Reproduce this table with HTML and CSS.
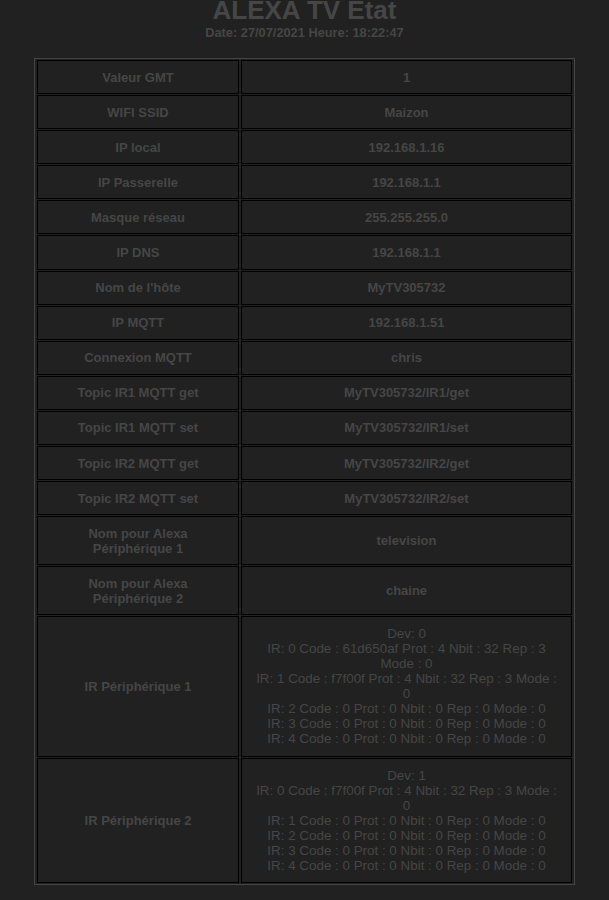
FILE: index.html
```html
<!DOCTYPE html>
<html lang="fr">
<head>
<meta charset="utf-8">
<title>ALEXA TV Etat</title>
<link rel="stylesheet" href="styles.css">
</head>
<body>
<header class="head">
  <h1 class="title">ALEXA TV Etat</h1>
  <div class="date">Date: 27/07/2021 Heure: 18:22:47</div>
</header>
<table class="info">
  <tr><td class="lab">Valeur GMT</td><td class="val">1</td></tr>
  <tr><td class="lab">WIFI SSID</td><td class="val">Maizon</td></tr>
  <tr><td class="lab">IP local</td><td class="val">192.168.1.16</td></tr>
  <tr><td class="lab">IP Passerelle</td><td class="val">192.168.1.1</td></tr>
  <tr><td class="lab">Masque réseau</td><td class="val">255.255.255.0</td></tr>
  <tr><td class="lab">IP DNS</td><td class="val">192.168.1.1</td></tr>
  <tr><td class="lab">Nom de l'hôte</td><td class="val">MyTV305732</td></tr>
  <tr><td class="lab">IP MQTT</td><td class="val">192.168.1.51</td></tr>
  <tr><td class="lab">Connexion MQTT</td><td class="val">chris</td></tr>
  <tr><td class="lab">Topic IR1 MQTT get</td><td class="val">MyTV305732/IR1/get</td></tr>
  <tr><td class="lab">Topic IR1 MQTT set</td><td class="val">MyTV305732/IR1/set</td></tr>
  <tr><td class="lab">Topic IR2 MQTT get</td><td class="val">MyTV305732/IR2/get</td></tr>
  <tr><td class="lab">Topic IR2 MQTT set</td><td class="val">MyTV305732/IR2/set</td></tr>
  <tr><td class="lab">Nom pour Alexa<br>Périphérique 1</td><td class="val">television</td></tr>
  <tr><td class="lab">Nom pour Alexa<br>Périphérique 2</td><td class="val">chaine</td></tr>
  <tr><td class="lab">IR Périphérique 1</td><td class="val ir">Dev: 0<br>IR: 0 Code : 61d650af Prot : 4 Nbit : 32 Rep : 3 Mode : 0<br>IR: 1 Code : f7f00f Prot : 4 Nbit : 32 Rep : 3 Mode : 0<br>IR: 2 Code : 0 Prot : 0 Nbit : 0 Rep : 0 Mode : 0<br>IR: 3 Code : 0 Prot : 0 Nbit : 0 Rep : 0 Mode : 0<br>IR: 4 Code : 0 Prot : 0 Nbit : 0 Rep : 0 Mode : 0</td></tr>
  <tr><td class="lab">IR Périphérique 2</td><td class="val ir">Dev: 1<br>IR: 0 Code : f7f00f Prot : 4 Nbit : 32 Rep : 3 Mode : 0<br>IR: 1 Code : 0 Prot : 0 Nbit : 0 Rep : 0 Mode : 0<br>IR: 2 Code : 0 Prot : 0 Nbit : 0 Rep : 0 Mode : 0<br>IR: 3 Code : 0 Prot : 0 Nbit : 0 Rep : 0 Mode : 0<br>IR: 4 Code : 0 Prot : 0 Nbit : 0 Rep : 0 Mode : 0</td></tr>
</table>
</body>
</html>
```
FILE: styles.css
```css
html, body {
  margin: 0;
  padding: 0;
  background: #212121;
}
body {
  font-family: "Liberation Sans", Arial, sans-serif;
  color: #464646;
  padding-bottom: 16px;
}
.head {
  text-align: center;
  margin-top: -5px;
}
.title {
  font-size: 26px;
  font-weight: bold;
  line-height: 30px;
  margin: 0;
}
.date {
  font-size: 12.8px;
  font-weight: bold;
  line-height: 14px;
  margin-top: 1px;
}
.info {
  width: 541px;
  margin: 18px auto 0;
  border: 1px solid #444;
  border-spacing: 2px 1px;
  font-size: 13px;
  font-weight: bold;
  text-align: center;
}
.info td {
  border: 1px solid #000;
  padding: 8.5px 8px 8.6px;
  line-height: 15px;
}
.info td.val {
  padding-left: 10px;
  padding-right: 10px;
}
.info td.ir {
  padding-top: 9px;
  padding-bottom: 9.5px;
}
.lab {
  width: 184px;
}
.ir {
  font-weight: normal;
  font-size: 13.4px;
}
```
